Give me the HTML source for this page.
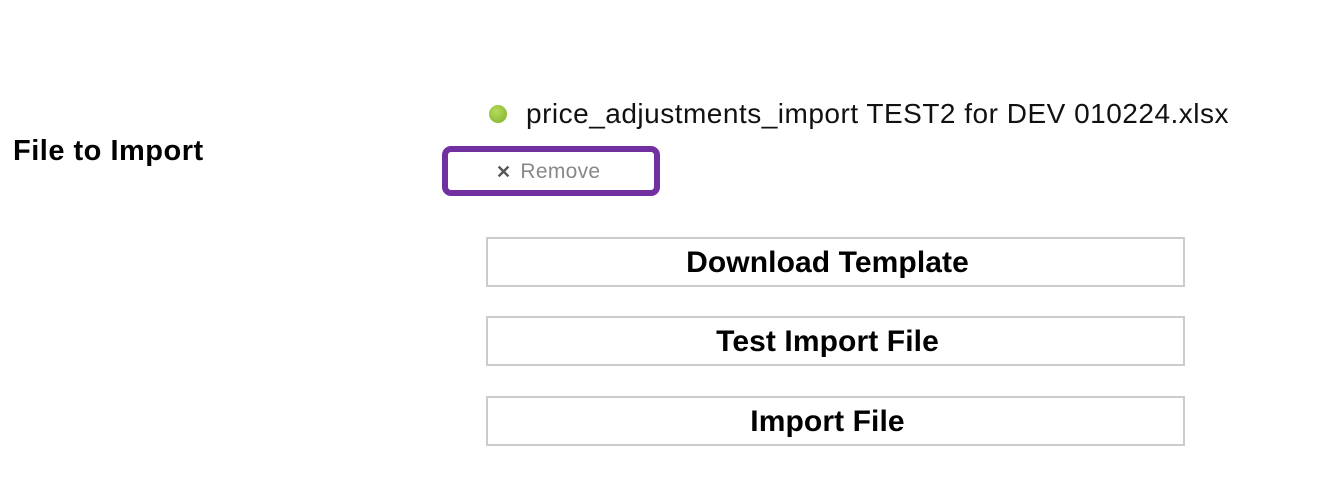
<!DOCTYPE html>
<html><head><style>
body{margin:0;width:1332px;height:477px;background:#fff;font-family:"Liberation Sans",sans-serif;position:relative;overflow:hidden}
.lbl{position:absolute;left:13px;top:135px;font-size:29px;font-weight:bold;color:#000;letter-spacing:0.5px}
.dot{position:absolute;left:489px;top:105px;width:18px;height:18px;border-radius:50%;background:radial-gradient(circle at 40% 35%,#b5dc5a,#7fae2a)}
.fn{position:absolute;left:526px;top:98px;font-size:28px;color:#111;white-space:nowrap;letter-spacing:0.5px}
.box{position:absolute;left:442px;top:146px;width:206px;height:38px;border:6px solid #7030a0;border-radius:9px}
.rm{position:absolute;left:496px;top:160px;font-size:21px;color:#888;letter-spacing:0.3px}
.rm b{color:#555;margin-right:9px;font-size:18px}
.btn{position:absolute;left:486px;width:679px;padding-right:16px;height:46px;border:2px solid #ccc;text-align:center;line-height:48px;font-size:30px;font-weight:bold;color:#000;letter-spacing:0.1px}
</style></head><body>
<div class="lbl">File to Import</div>
<div class="dot"></div>
<div class="fn">price_adjustments_import TEST2 for DEV 010224.xlsx</div>
<div class="box"></div>
<div class="rm"><b>✕</b>Remove</div>
<div class="btn" style="top:237px">Download Template</div>
<div class="btn" style="top:316px">Test Import File</div>
<div class="btn" style="top:396px">Import File</div>
</body></html>
